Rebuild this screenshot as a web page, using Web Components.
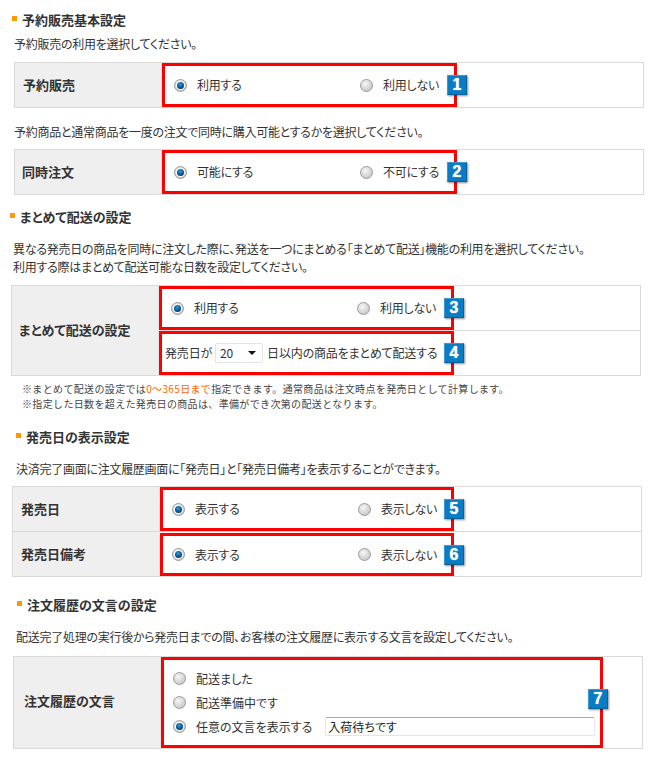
<!DOCTYPE html>
<html lang="ja"><head><meta charset="utf-8">
<style>
html,body{margin:0;padding:0;background:#fff}
body{width:658px;height:768px;overflow:hidden;font:12px/18px "Noto Sans CJK JP","Liberation Sans",sans-serif;color:#333;font-feature-settings:"palt";display:flex;flex-direction:column}
</style></head><body>
<x-head style="margin:11px 0 0 12px">予約販売基本設定</x-head>
<x-text style="margin:6px 0 0 14px">予約販売の利用を選択してください。</x-text>
<x-table style="margin:9px 0 0 14px">
  <x-label style="--lp:8px">予約販売</x-label>
  <x-cell><x-frame n="1" style="--h:44px;--w:295px"><x-opt on>利用する</x-opt><x-opt>利用しない</x-opt></x-frame></x-cell>
</x-table>
<x-text style="margin:15px 0 0 14px">予約商品と通常商品を一度の注文で同時に購入可能とするかを選択してください。</x-text>
<x-table style="margin:8px 0 0 14px">
  <x-label style="--lp:7px">同時注文</x-label>
  <x-cell><x-frame n="2" style="--h:44px;--w:295px"><x-opt on>可能にする</x-opt><x-opt>不可にする</x-opt></x-frame></x-cell>
</x-table>
<x-head style="margin:13px 0 0 10px">まとめて配送の設定</x-head>
<x-text style="margin:14px 0 0 13px">異なる発売日の商品を同時に注文した際に、発送を一つにまとめる「まとめて配送」機能の利用を選択してください。<br>利用する際はまとめて配送可能な日数を設定してください。</x-text>
<x-table style="margin:9px 0 0 11px">
  <x-label style="grid-row:span 2;--lp:7px;padding-bottom:2px">まとめて配送の設定</x-label>
  <x-cell><x-frame n="3" style="--h:44px;--w:295px"><x-opt on>利用する</x-opt><x-opt>利用しない</x-opt></x-frame></x-cell>
  <x-cell top><x-frame n="4" style="--h:44px;--w:295px;--pad:3px;--ls:-.17px">発売日が<x-pick>20</x-pick>日以内の商品をまとめて配送する</x-frame></x-cell>
</x-table>
<x-note style="margin:5px 0 0 22px">※まとめて配送の設定では<em style="color:#f60;font-style:normal">0〜365日まで</em>指定できます。通常商品は注文時点を発売日として計算します。<br>※指定した日数を超えた発売日の商品は、準備ができ次第の配送となります。</x-note>
<x-head style="margin:17px 0 0 16px">発売日の表示設定</x-head>
<x-text style="margin:14px 0 0 16px">決済完了画面に注文履歴画面に「発売日」と「発売日備考」を表示することができます。</x-text>
<x-table style="margin:8px 0 0 12px">
  <x-label style="--lp:8px">発売日</x-label>
  <x-cell><x-frame n="5" style="--h:44px;--w:294px"><x-opt on>表示する</x-opt><x-opt>表示しない</x-opt></x-frame></x-cell>
  <x-label top style="--lp:8px">発売日備考</x-label>
  <x-cell top><x-frame n="6" style="--h:43px;--w:294px;margin-top:1px"><x-opt on>表示する</x-opt><x-opt>表示しない</x-opt></x-frame></x-cell>
</x-table>
<x-head style="margin:19px 0 0 17px">注文履歴の文言の設定</x-head>
<x-text style="margin:14px 0 0 16px">配送完了処理の実行後から発売日までの間、お客様の注文履歴に表示する文言を設定してください。</x-text>
<x-table style="margin:10px 0 0 13px">
  <x-label style="--lp:10px;padding-bottom:4px">注文履歴の文言</x-label>
  <x-cell><x-frame n="7" stack style="--h:91px;--w:442px;--r:-8px;--dy:-4px;--ls:0px">
    <x-opt>配送ました</x-opt><x-opt>配送準備中です</x-opt><x-opt on wide>任意の文言を表示する<x-field>入荷待ちです</x-field></x-opt>
  </x-frame></x-cell>
</x-table>
<script>
function def(name,css,html,extra){
  customElements.define(name,class extends HTMLElement{
    constructor(){super();this.attachShadow({mode:'open'}).innerHTML='<style>'+css+'</style>'+html;}
    connectedCallback(){if(extra)extra(this);}
  });
}
def('x-head',':host{display:flex;align-items:center;gap:5px;font-size:13px;font-weight:700;line-height:18px;color:#333}i{width:5px;height:5px;background:#f90;display:block;margin-top:-3px}','<i></i><slot></slot>');
def('x-text',':host{display:block;line-height:18px;letter-spacing:-.27px}','<slot></slot>');
def('x-note',':host{display:block;font-size:10px;line-height:15px;letter-spacing:.35px;font-feature-settings:normal;color:#444}','<slot></slot>');
def('x-table',':host{display:grid;grid-template-columns:147px 482px;width:630px;box-sizing:border-box;border:1px solid #d9d9d9}','<slot></slot>');
def('x-label',':host{display:flex;align-items:center;background:#efefef;font-size:13px;font-weight:700;padding-left:var(--lp,8px);border-right:1px solid #e4e4e4;box-sizing:border-box}:host([top]){border-top:1px solid #d9d9d9}','<slot></slot>');
def('x-cell',':host{display:block;box-sizing:border-box}:host([top]){border-top:1px solid #d9d9d9}','<slot></slot>');
def('x-frame',`:host{display:flex;align-items:center;position:relative;box-sizing:border-box;width:var(--w);height:var(--h);border:3px solid #f00;padding-left:var(--pad,9px);white-space:nowrap;background:#fff;letter-spacing:var(--ls,-.25px)}
:host([stack]){flex-direction:column;align-items:flex-start;justify-content:center;gap:6px}
b{position:absolute;right:var(--r,-13px);top:50%;margin-top:calc(-10px + var(--dy,0px));width:20px;height:20px;box-sizing:border-box;background:#0a7cc4;border:1px solid #0a6098;border-top-color:#3f97cf;border-left-color:#3f97cf;box-shadow:1px 1px 2px rgba(0,0,0,.45);color:#fff;font:700 16px/18px "Liberation Sans",sans-serif;letter-spacing:0;text-align:center;text-shadow:0 0 1px #fff}`,'<slot></slot><b></b>',el=>{el.shadowRoot.querySelector('b').textContent=el.getAttribute('n');});
def('x-opt',`:host{display:flex;flex:none;align-items:center;gap:10px;width:186px;height:18px;white-space:nowrap}:host([wide]){width:auto}svg{flex:none;width:13px;height:13px}`,
`<svg viewBox="0 0 13 13"><defs><radialGradient id="o" cx=".4" cy=".35" r=".8"><stop offset="0" stop-color="#f6f6f6"/><stop offset="1" stop-color="#bdbdbd"/></radialGradient><radialGradient id="b" cx=".45" cy=".35" r=".7"><stop offset="0" stop-color="#2f9fe0"/><stop offset=".6" stop-color="#0a5a98"/><stop offset="1" stop-color="#03345e"/></radialGradient></defs><circle cx="6.5" cy="6.5" r="6" fill="url(#o)" stroke="#9c9c9c"/><circle class="d" cx="6.5" cy="6.5" r="4.6" fill="#fff" opacity=".85"/><circle class="d" cx="6.5" cy="6.5" r="3.5" fill="url(#b)"/></svg><slot></slot>`,
el=>{if(!el.hasAttribute('on'))el.shadowRoot.querySelectorAll('.d').forEach(n=>n.remove());});
def('x-pick',`:host{display:inline-flex;align-items:center;position:relative;box-sizing:border-box;width:48px;height:20px;margin:0 4px 0 3px;border:1px solid #dfe4ea;border-radius:2px;padding-left:4px;background:#fff}i{position:absolute;right:6px;top:7px;border:4px solid transparent;border-top:4px solid #111;border-bottom:0}`,'<slot></slot><i></i>');
def('x-field',`:host{display:flex;align-items:center;box-sizing:border-box;width:270px;height:19px;margin-left:3px;padding-left:2px;border:1px solid #e2e6ea;border-top-color:#a8a8ae;border-radius:2px;color:#222}`,'<slot></slot>');
</script>
</body></html>
